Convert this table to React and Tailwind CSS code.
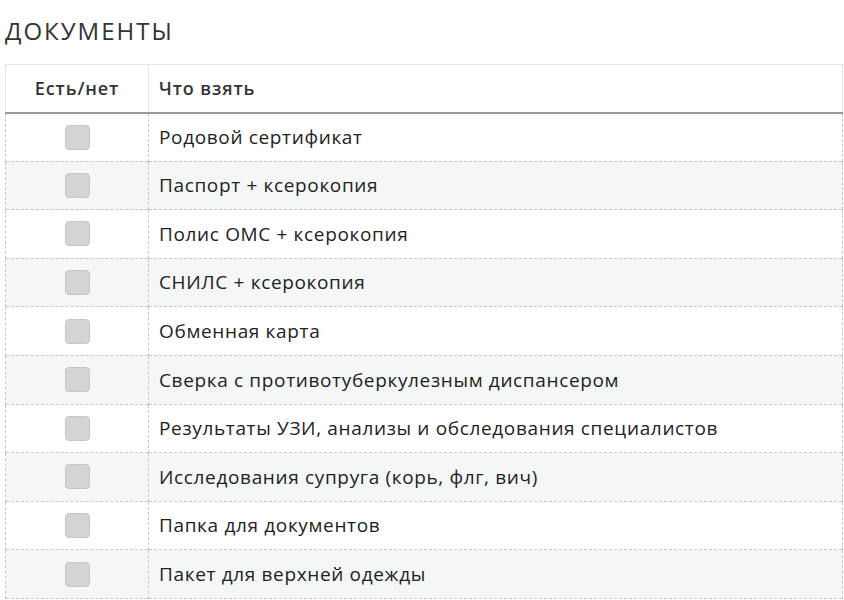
const items = [
  'Родовой сертификат',
  'Паспорт + ксерокопия',
  'Полис ОМС + ксерокопия',
  'СНИЛС + ксерокопия',
  'Обменная карта',
  'Сверка с противотуберкулезным диспансером',
  'Результаты УЗИ, анализы и обследования специалистов',
  'Исследования супруга (корь, флг, вич)',
  'Папка для документов',
  'Пакет для верхней одежды',
]

export default function App() {
  return (
    <div className="w-[844px] h-[600px] overflow-hidden bg-white text-[#222] font-['Open_Sans','Noto_Sans',sans-serif]">
      <h2 className="pl-[5px] pt-[14px] h-[64px] text-[24px] leading-[34px] text-[#333] tracking-[2px]">ДОКУМЕНТЫ</h2>
      <table className="ml-[5px] w-[838px] border-collapse">
        <thead>
          <tr className="h-[48px] border-t border-[#e6e6e6]">
            <th className="w-[143px] border-l border-r border-[#e6e6e6] text-center text-[18px] font-semibold text-[#333] tracking-[0.9px]">Есть/нет</th>
            <th className="pl-[10px] text-left text-[18px] font-semibold text-[#333] border-r border-[#e6e6e6] tracking-[0.9px]">Что взять</th>
          </tr>
        </thead>
        <tbody className="border-t-2 border-[#999]">
          {items.map((t, i) => (
            <tr
              key={i}
              className={`h-[48.6px] border-b border-dashed border-[#c8c8c8] ${i % 2 ? 'bg-[#f4f7f6]' : 'bg-white'}`}
            >
              <td className="border-l border-r border-dashed border-[#c8c8c8]">
                <div className="mx-auto w-[25px] h-[25px] rounded-[4px] bg-[#d4d4d4] border border-[#c6c6c6]" />
              </td>
              <td className="pl-[10px] text-[19px] text-[#222] tracking-[0.65px] border-r border-dashed border-[#c8c8c8]">{t}</td>
            </tr>
          ))}
        </tbody>
      </table>
    </div>
  )
}
